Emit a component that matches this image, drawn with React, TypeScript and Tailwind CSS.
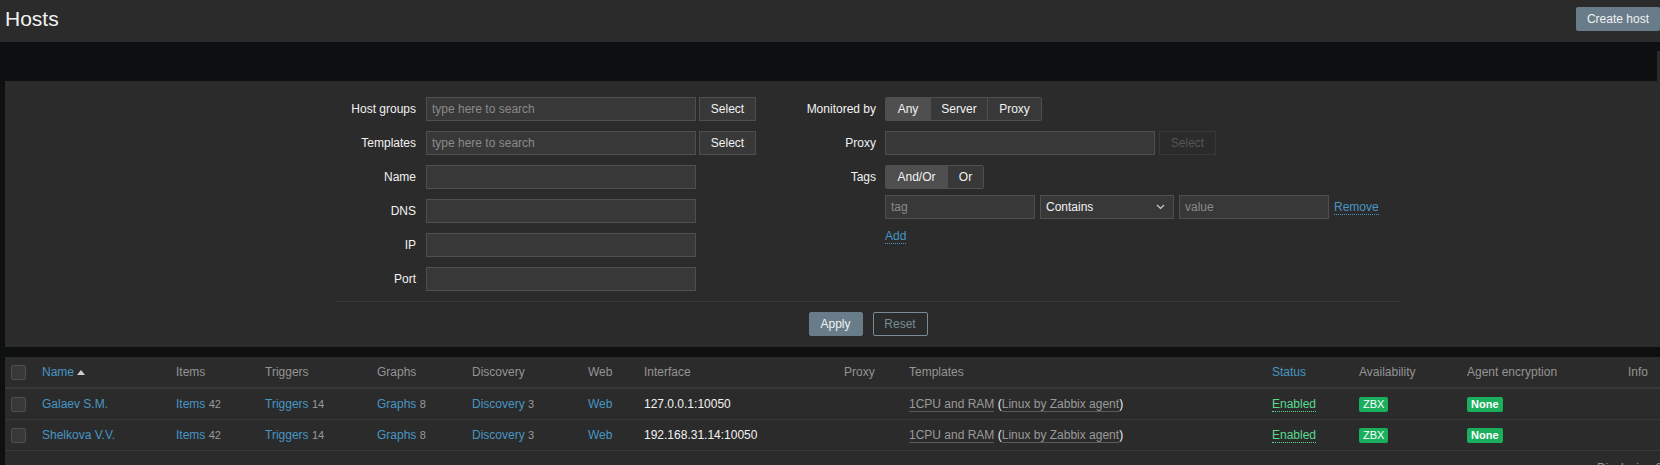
import React from "react";

// Zabbix dark theme colours
const LINK = "text-[#4796c4]";
const GREY = "text-[#999999]";

const inputCls =
  "h-[24px] border border-[#4f4f4f] bg-[#383838] px-[5px] text-[12px] text-[#f2f2f2] outline-none placeholder:text-[#8a8a8a]";

const hosts = [
  { name: "Galaev S.M.", iface: "127.0.0.1:10050" },
  { name: "Shelkova V.V.", iface: "192.168.31.14:10050" },
];

function Row({ label, children, labelW = "w-[80px]", gap = "gap-[10px]" }: { label?: string; children: React.ReactNode; labelW?: string; gap?: string }) {
  return (
    <div className={`flex items-center ${gap}`}>
      <div className={`${labelW} shrink-0 text-right leading-[24px] text-[#f2f2f2]`}>{label}</div>
      <div className="flex items-center gap-[3px]">{children}</div>
    </div>
  );
}

function SelectBtn({ disabled }: { disabled?: boolean }) {
  return (
    <button
      type="button"
      className={
        disabled
          ? "ml-[1px] h-[24px] w-[57px] border border-[#383838] bg-[#2b2b2b] text-[12px] text-[#555555]"
          : "h-[24px] w-[57px] border border-[#4f4f4f] bg-[#383838] text-[12px] text-[#f2f2f2]"
      }
    >
      Select
    </button>
  );
}

function Segmented({ items }: { items: { label: string; w: string; on?: boolean }[] }) {
  return (
    <div className="flex h-[24px] overflow-hidden rounded-[2px] border border-[#4f4f4f]">
      {items.map((it, i) => (
        <div
          key={it.label}
          className={`${it.w} flex items-center justify-center text-[12px] text-[#f2f2f2] ${
            it.on ? "bg-[#4f4f4f]" : "bg-[#383838]"
          } ${i > 0 ? "border-l border-[#4f4f4f]" : ""}`}
        >
          {it.label}
        </div>
      ))}
    </div>
  );
}

function Checkbox() {
  return <div className="h-[15px] w-[15px] rounded-[2px] border border-[#4f4f4f] bg-[#383838]" />;
}

function Count({ text, n }: { text: string; n: number }) {
  return (
    <span className="whitespace-nowrap">
      <span className={LINK}>{text}</span> <span className={`${GREY} text-[11px]`}>{n}</span>
    </span>
  );
}

const cols =
  "grid grid-cols-[37px_134px_89px_112px_95px_116px_56px_200px_65px_363px_87px_108px_161px_103px] items-center";

export default function App() {
  return (
    <div className="w-full overflow-hidden bg-[#0e0f11] font-['Liberation_Sans',Arial,sans-serif] text-[12px] text-[#f2f2f2]">
      {/* Header */}
      <div className="flex h-[42px] items-start justify-between bg-[#2b2b2b] pt-[7px] pl-[5px]">
        <h1 className="text-[21px] leading-[24px] text-[#f2f2f2]">Hosts</h1>
        <button type="button" className="h-[24px] rounded-[2px] bg-[#687c89] px-[11px] text-[12px] text-[#f2f2f2]">
          Create host
        </button>
      </div>

      <div className="w-[1726px] pl-[5px] box-content">
        {/* Filter tab */}
        <div className="mt-[9px] flex justify-end">
          <div className="h-[30px] w-[74px] bg-[#2b2b2b]" />
        </div>

        {/* Filter panel */}
        <div className="h-[266px] bg-[#2b2b2b] pt-[16px]">
          <div className="ml-[331px] w-[1064px]">
            <div className="flex">
              <div className="flex w-[460px] flex-col gap-[10px]">
                <Row label="Host groups">
                  <input className={`${inputCls} w-[270px]`} placeholder="type here to search" />
                  <SelectBtn />
                </Row>
                <Row label="Templates">
                  <input className={`${inputCls} w-[270px]`} placeholder="type here to search" />
                  <SelectBtn />
                </Row>
                <Row label="Name">
                  <input className={`${inputCls} w-[270px]`} />
                </Row>
                <Row label="DNS">
                  <input className={`${inputCls} w-[270px]`} />
                </Row>
                <Row label="IP">
                  <input className={`${inputCls} w-[270px]`} />
                </Row>
                <Row label="Port">
                  <input className={`${inputCls} w-[270px]`} />
                </Row>
              </div>

              <div className="flex flex-col">
                <Row label="Monitored by" gap="gap-[9px]">
                  <Segmented
                    items={[
                      { label: "Any", w: "w-[44px]", on: true },
                      { label: "Server", w: "w-[57px]" },
                      { label: "Proxy", w: "w-[54px]" },
                    ]}
                  />
                </Row>
                <div className="mt-[10px]">
                  <Row label="Proxy" gap="gap-[9px]">
                    <input className={`${inputCls} w-[270px]`} />
                    <SelectBtn disabled />
                  </Row>
                </div>
                <div className="mt-[10px]">
                  <Row label="Tags" gap="gap-[9px]">
                    <Segmented
                      items={[
                        { label: "And/Or", w: "w-[61px]", on: true },
                        { label: "Or", w: "w-[36px]" },
                      ]}
                    />
                  </Row>
                </div>
                <div className="mt-[6px] ml-[89px] flex items-center gap-[5px]">
                  <input className={`${inputCls} w-[150px]`} placeholder="tag" />
                  <div className={`${inputCls} flex w-[134px] items-center justify-between`}>
                    <span>Contains</span>
                    <svg width="9" height="6" viewBox="0 0 9 6" className="mr-[3px]">
                      <path d="M1 1l3.5 3.5L8 1" fill="none" stroke="#cfcfcf" strokeWidth="1.2" />
                    </svg>
                  </div>
                  <input className={`${inputCls} w-[150px]`} placeholder="value" />
                  <span className={`${LINK} border-b border-dotted border-[#4796c4] leading-[14px]`}>Remove</span>
                </div>
                <div className="mt-[10px] ml-[89px] flex">
                  <span className={`${LINK} border-b border-dotted border-[#4796c4] leading-[14px]`}>Add</span>
                </div>
              </div>
            </div>

            <div className="mt-[10px] h-[1px] bg-[#383838]" />

            <div className="mt-[10px] flex justify-center gap-[10px]">
              <button type="button" className="h-[24px] w-[54px] rounded-[2px] border border-[#687c89] bg-[#687c89] text-[12px] text-[#f2f2f2]">
                Apply
              </button>
              <button type="button" className="h-[24px] w-[55px] rounded-[2px] border border-[#768d99] text-[12px] text-[#768d99]">
                Reset
              </button>
            </div>
          </div>
        </div>

        {/* Hosts table */}
        <div className="mt-[10px] bg-[#2b2b2b]">
          <div className={`${cols} h-[32px] border-b-2 border-[#383838] text-[#949494]`}>
            <div className="pl-[6px]">
              <Checkbox />
            </div>
            <div className="flex items-center gap-[3px]">
              <span className={LINK}>Name</span>
              <span className="h-0 w-0 border-x-[4px] border-b-[5px] border-x-transparent border-b-[#d0d0d0]" />
            </div>
            <div>Items</div>
            <div>Triggers</div>
            <div>Graphs</div>
            <div>Discovery</div>
            <div>Web</div>
            <div>Interface</div>
            <div>Proxy</div>
            <div>Templates</div>
            <div className={LINK}>Status</div>
            <div>Availability</div>
            <div>Agent encryption</div>
            <div>Info</div>
          </div>

          {hosts.map((h) => (
            <div key={h.name} className={`${cols} h-[31px] border-b border-[#383838]`}>
              <div className="pl-[6px]">
                <Checkbox />
              </div>
              <div className={LINK}>{h.name}</div>
              <div>
                <Count text="Items" n={42} />
              </div>
              <div>
                <Count text="Triggers" n={14} />
              </div>
              <div>
                <Count text="Graphs" n={8} />
              </div>
              <div>
                <Count text="Discovery" n={3} />
              </div>
              <div className={LINK}>Web</div>
              <div className="text-[#f2f2f2]">{h.iface}</div>
              <div />
              <div className="whitespace-nowrap">
                <span className="border-b border-[#5a5a5a] text-[#9a9a9a]">1CPU and RAM</span> (
                <span className="border-b border-[#5a5a5a] text-[#9a9a9a]">Linux by Zabbix agent</span>)
              </div>
              <div>
                <span className="border-b border-dotted border-[#59db8f] text-[#59db8f]">Enabled</span>
              </div>
              <div>
                <span className="inline-block rounded-[2px] bg-[#1aaf5d] px-[4px] text-[11px] leading-[15px] text-white">ZBX</span>
              </div>
              <div>
                <span className="inline-block rounded-[2px] bg-[#1aaf5d] px-[4px] text-[11px] font-bold leading-[15px] text-white">None</span>
              </div>
              <div />
            </div>
          ))}

          <div className="flex h-[40px] justify-end pt-[10px] pr-[12px]">
            <span className={`${GREY} leading-[14px]`}>Displaying 2 of 2 found</span>
          </div>
        </div>
      </div>
    </div>
  );
}
